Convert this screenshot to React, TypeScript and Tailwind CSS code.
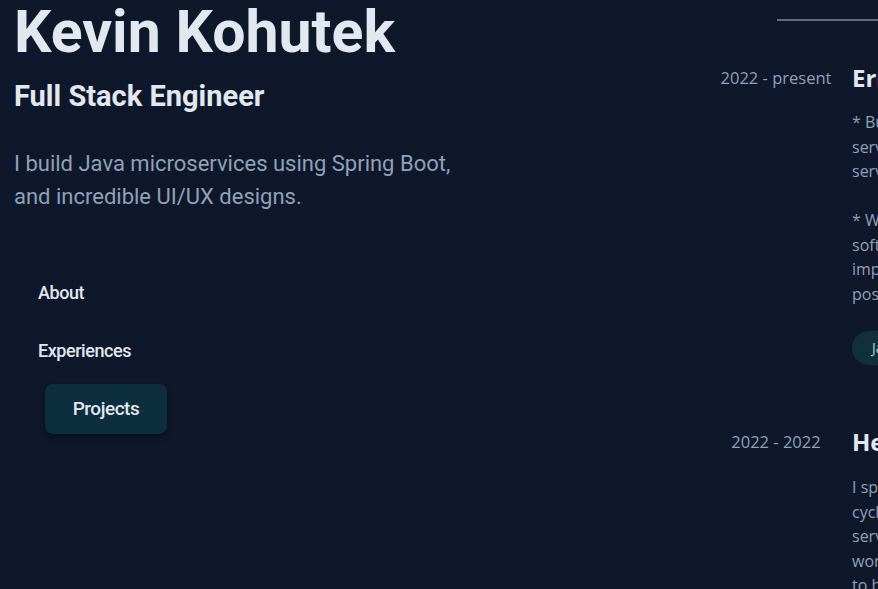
import React from "react";

type Job = {
  period: string;
  company: string;
  lines: string[];
  skills: string[];
};

const jobs: Job[] = [
  {
    period: "2022 - present",
    company: "Ernst & Young",
    lines: [
      "* Built and maintained Java Spring Boot microservices",
      "serving millions of requests per day across distributed",
      "services and cloud infrastructure.",
      "",
      "* Worked closely with product and design teams to deliver",
      "software features, improving performance and",
      "implementing best practices wherever",
      "possible.",
    ],
    skills: ["Java", "Spring Boot", "AWS"],
  },
  {
    period: "2022 - 2022",
    company: "Hershey",
    lines: [
      "I spent the summer working through the full development",
      "cycle of internal tools, building REST APIs and",
      "services used by several teams, and learned how to",
      "work inside a large engineering organization in order",
      "to bring features from design to production.",
    ],
    skills: [],
  },
];

const navItems = ["About", "Experiences"];

function JobRow({ job, first }: { job: Job; first: boolean }) {
  return (
    <div className={`flex gap-3 ${first ? "mt-[43px]" : "mt-[63px]"}`}>
      <div className="w-32 shrink-0 text-center text-[16.5px] leading-7 text-slate-400">
        {job.period}
      </div>
      <div className="w-[560px] shrink-0">
        <h3 className="text-2xl font-bold leading-7 text-slate-200">
          {job.company}
        </h3>
        <div
          className={`text-base leading-[24.5px] text-slate-400 ${
            first ? "mt-[18px]" : "mt-[19px]"
          }`}
        >
          {job.lines.map((line, i) => (
            <p key={i} className="h-[24.5px] whitespace-nowrap">
              {line}
            </p>
          ))}
        </div>
        {job.skills.length > 0 && (
          <div className="mt-[25px] flex gap-2">
            {job.skills.map((s) => (
              <span
                key={s}
                className="flex h-[34px] items-center rounded-full bg-[#12303a] px-5 text-sm font-medium text-[#a9d6d8]"
              >
                {s}
              </span>
            ))}
          </div>
        )}
      </div>
    </div>
  );
}

export default function App() {
  return (
    <div className="flex h-[589px] w-[878px] overflow-hidden bg-[#0f172a]">
      <div
        className="w-[712px] shrink-0 pl-[14px]"
        style={{ fontFamily: "Roboto, 'Liberation Sans', sans-serif" }}
      >
        <h1 className="pt-[2px] text-[59px] font-bold leading-none text-slate-200">
          Kevin Kohutek
        </h1>
        <h2 className="mt-[17px] text-[29px] font-bold leading-[1.25] text-slate-200">
          Full Stack Engineer
        </h2>
        <p className="mt-[33px] max-w-[460px] text-[22px] leading-[33px] text-slate-400">
          I build Java microservices using Spring Boot, and incredible UI/UX designs.
        </p>
        <nav className="mt-[51px] flex flex-col">
          {navItems.map((item) => (
            <a
              key={item}
              href="#"
              className="flex h-[58px] items-center pl-[24px] text-lg font-medium tracking-tight text-slate-200"
            >
              {item}
            </a>
          ))}
          <a
            href="#"
            className="ml-[31px] mt-[4px] flex h-[50px] w-[122px] items-center justify-center rounded-lg bg-[#0c2e3d] text-[19px] font-medium tracking-tight text-slate-200 shadow-md shadow-black/30"
          >
            Projects
          </a>
        </nav>
      </div>
      <div
        className="w-[700px] shrink-0"
        style={{ fontFamily: "'Open Sans', 'Noto Sans', sans-serif" }}
      >
        <div className="ml-[65px] mt-[19px] h-[2px] bg-[#5f6e84]" />
        {jobs.map((job, i) => (
          <JobRow key={job.period + job.company} job={job} first={i === 0} />
        ))}
      </div>
    </div>
  );
}
